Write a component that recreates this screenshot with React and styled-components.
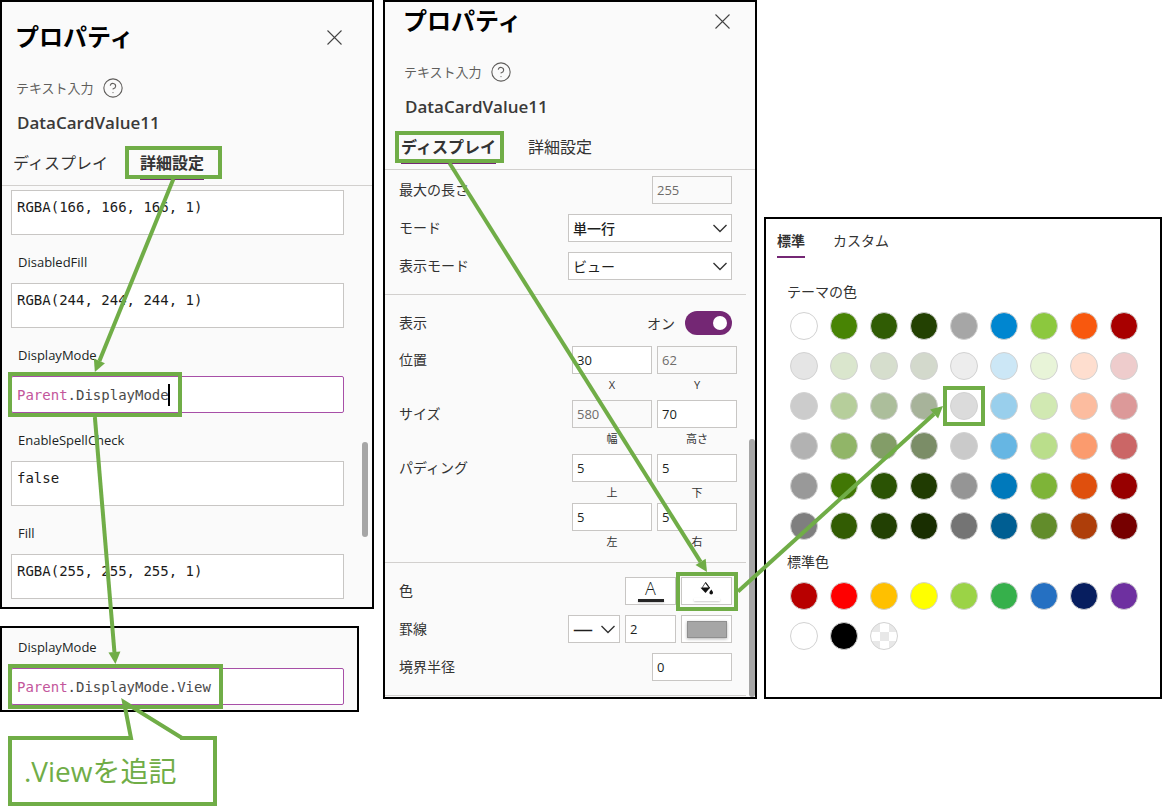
import React, { useLayoutEffect, useRef, useState } from "react";
import styled, { createGlobalStyle, css } from "styled-components";
import { CircleHelp } from "lucide-react";

const GREEN = "#70ad47";
const PURPLE = "#742774";

const GlobalStyle = createGlobalStyle`
  * {
    box-sizing: border-box;
  }

  body {
    margin: 0;
    background: #fff;
    color: #333;
    font-family: "Open Sans", "Noto Sans CJK JP", sans-serif;
    font-size: 14px;
  }

  button,
  input,
  select,
  textarea {
    margin: 0;
    font: inherit;
    color: inherit;
  }
`;

const Board = styled.main`
  position: relative;
  display: grid;
  grid-template-columns: 374fr 779fr;
  gap: 9px;
  align-items: start;
`;

const LeftColumn = styled.div`
  display: flex;
  flex-direction: column;
`;

const RightColumn = styled.div`
  display: grid;
  grid-template-columns: 374fr 398fr;
  gap: 7px;
  align-items: end;
`;

const Panel = styled.section`
  position: relative;
  border: 2px solid #000;
  background: ${({ $white }) => ($white ? "#fff" : "#fafafa")};
`;

const ResultPanel = styled(Panel)`
  margin: 17px 15px 0 0;
  padding: 0 13px 5px 9px;
`;

/* header */

const Header = styled.header`
  padding: ${({ $scrolled }) =>
    $scrolled ? "1px 25px 0 16px" : "17px 30px 0 11px"};
  border-bottom: 1px solid #d2d0ce;
`;

const TitleRow = styled.div`
  display: flex;
  align-items: center;
  justify-content: space-between;
  height: 36px;
  padding-left: 2px;
  margin-bottom: 16px;
`;

const Title = styled.h1`
  margin: 0;
  font-size: 24px;
  line-height: 36px;
  font-weight: 700;
  color: #000;
`;

const CloseButton = styled.button`
  display: flex;
  padding: 0;
  border: 0;
  background: none;
  color: #444;
`;

const TypeRow = styled.div`
  display: flex;
  align-items: center;
  gap: 8px;
  height: 33px;
  padding-left: 3px;
  font-size: 13px;
  color: #605e5c;
`;

const ControlName = styled.h2`
  margin: 0;
  padding-left: 4px;
  font-size: 17px;
  line-height: 38px;
  font-weight: 600;
  color: #3b3a39;
`;

const Tabs = styled.div`
  display: flex;
  gap: 32px;
  padding-bottom: 5px;
`;

const Tab = styled.button`
  position: relative;
  height: 38px;
  padding: 6px 0 0;
  border: 0;
  border-bottom: 2px solid ${({ $active }) => ($active ? PURPLE : "transparent")};
  background: none;
  font-size: 16px;
  line-height: 30px;
  font-weight: ${({ $active }) => ($active ? 700 : 400)};
  white-space: nowrap;
`;

const Highlight = styled.span`
  position: absolute;
  inset: ${({ $inset }) => $inset};
  z-index: 2;
  border: 4px solid ${GREEN};
  pointer-events: none;
`;

/* formula list */

const Formulas = styled.div`
  padding: 4px 28px 8px 9px;
`;

const FormulaLabel = styled.label`
  display: block;
  padding: ${({ $compact }) => ($compact ? "0 0 2px 7px" : "6px 0 0 7px")};
  font-size: 13px;
  line-height: ${({ $compact }) => ($compact ? "38px" : "42px")};
  color: #201f1e;
`;

const codeText = css`
  font-family: "DejaVu Sans Mono", "Liberation Mono", monospace;
  font-size: 14px;
`;

const FormulaBox = styled.textarea`
  ${codeText}
  display: block;
  width: 100%;
  height: 45px;
  padding: 6px 5px;
  border: 1px solid #c8c6c4;
  border-radius: 0;
  background: #fff;
  line-height: 20px;
  color: #1b1b1b;
  resize: none;
`;

const Editor = styled.div`
  position: relative;
  height: 37px;
  border: 1px solid #a74fa7;
  border-radius: 2px;
  background: #fff;
`;

const EditorInput = styled.input`
  ${codeText}
  position: absolute;
  inset: 0;
  width: 100%;
  padding: 0 5px;
  border: 0;
  outline: 0;
  background: none;
  color: transparent;
`;

const Tokens = styled.div`
  ${codeText}
  position: relative;
  display: inline-flex;
  align-items: center;
  height: 35px;
  padding: 0 5px;
  color: #4a4a4a;
`;

const Keyword = styled.span`
  color: #c3569b;
`;

const Caret = styled.span`
  width: 2px;
  height: 22px;
  margin-left: -1px;
  background: #000;
`;

const Scrollbar = styled.div`
  position: absolute;
  right: ${({ $right }) => $right};
  top: ${({ $top }) => $top};
  bottom: ${({ $bottom }) => $bottom};
  width: 6px;
  border-radius: 3px;
  background: #a6a6a6;
`;

/* display settings */

const DisplayBody = styled.div`
  padding-bottom: 1px;
`;

const Section = styled.div`
  display: flex;
  flex-direction: column;
  gap: ${({ $gap }) => $gap};
  margin-right: 9px;
  padding: ${({ $pad }) => $pad};
  border-bottom: 1px solid #d2d0ce;
`;

const Row = styled.div`
  display: flex;
  align-items: ${({ $top }) => ($top ? "flex-start" : "center")};
  justify-content: space-between;
  min-height: ${({ $tall }) => ($tall ? "36px" : "28px")};
  margin-right: ${({ $top }) => ($top ? "-5px" : "0")};
`;

const RowLabel = styled.label`
  line-height: 28px;
  white-space: nowrap;
`;

const Controls = styled.div`
  display: flex;
  gap: 5px;
`;

const PairGrid = styled.div`
  display: grid;
  grid-template-columns: 80px 80px;
  column-gap: 5px;
`;

const PairCell = styled.label`
  display: flex;
  flex-direction: column;
  font-size: 11px;
  line-height: 21px;
  text-align: center;
`;

const boxed = css`
  height: 28px;
  border: 1px solid #c8c6c4;
  border-radius: 0;
  background: #fff;
`;

const NumberInput = styled.input`
  ${boxed}
  width: ${({ $width }) => $width || "80px"};
  padding: 0 4px;
  font-size: 13px;
  color: #201f1e;

  &:disabled {
    background: #fafafa;
    color: #6e6c6a;
  }
`;

const SelectWrap = styled.div`
  position: relative;
  width: ${({ $width }) => $width};

  svg {
    position: absolute;
    top: 10px;
    right: 5px;
    pointer-events: none;
  }
`;

const Select = styled.select`
  ${boxed}
  display: block;
  width: 100%;
  padding: 0 4px;
  appearance: none;
  font-weight: ${({ $strong }) => ($strong ? 500 : 400)};
  color: #201f1e;
`;

const LineSelect = styled(Select)`
  font-size: 20px;
  line-height: 24px;
`;

const ToggleLabel = styled.label`
  display: flex;
  align-items: center;
  gap: 10px;
`;

const Toggle = styled.input`
  appearance: none;
  width: 47px;
  height: 24px;
  border-radius: 12px;
  background: ${PURPLE};

  &::before {
    content: "";
    display: block;
    width: 14px;
    height: 14px;
    margin: 5px 5px 5px 28px;
    border-radius: 50%;
    background: #fff;
  }
`;

const ToolButton = styled.button`
  ${boxed}
  position: relative;
  display: flex;
  flex-direction: column;
  align-items: center;
  justify-content: center;
  gap: 2px;
  width: 51px;
  padding: 0;
`;

const Letter = styled.span`
  font-size: 18px;
  line-height: 17px;
  font-weight: 300;
  color: #201f1e;
`;

const ColorBar = styled.span`
  width: 26px;
  height: 3px;
  background: ${({ $color }) => $color};
  box-shadow: 0 1px 2px rgba(0, 0, 0, 0.2);
`;

const BorderColor = styled.span`
  width: 40px;
  height: 17px;
  border: 1px solid #8f8f8f;
  background: #a6a6a6;
  box-shadow: 0 1px 3px rgba(0, 0, 0, 0.3);
`;

/* colour picker */

const Picker = styled(Panel)`
  padding: 6px 11px 47px;
`;

const PickerTabs = styled.div`
  display: flex;
  gap: 28px;
`;

const PickerTab = styled.button`
  padding: 0;
  border: 0;
  border-bottom: 2px solid ${({ $active }) => ($active ? PURPLE : "transparent")};
  background: none;
  line-height: 31px;
  font-weight: ${({ $active }) => ($active ? 700 : 400)};
`;

const PaletteTitle = styled.h3`
  margin: ${({ $first }) => ($first ? "14px" : "2px")} 0 0 10px;
  font-size: 14px;
  line-height: 40px;
  font-weight: 400;
`;

const Palette = styled.div`
  display: grid;
  grid-template-columns: repeat(9, 28px);
  gap: 12px;
  margin-left: 13px;
`;

const Swatch = styled.button`
  position: relative;
  height: 28px;
  padding: 0;
  border: 1px solid #d2d2d2;
  border-radius: 50%;
  background: ${({ $color }) => $color};
`;

/* annotations */

const Callout = styled.div`
  position: relative;
  align-self: flex-start;
  margin: 24px 0 0 8px;
  padding: 10px 36px 9px 12px;
  border: 4px solid ${GREEN};
  background: #fff;
  font-size: 28px;
  line-height: 43px;
  color: ${GREEN};
`;

const CalloutTail = styled.svg`
  position: absolute;
  top: -44px;
  left: 102px;
  z-index: 3;
  overflow: visible;
`;

const ArrowLayer = styled.svg`
  position: absolute;
  inset: 0;
  z-index: 3;
  width: 100%;
  height: 100%;
  pointer-events: none;
`;

const formulas = [
  { value: "RGBA(166, 166, 166, 1)" },
  { name: "DisabledFill", value: "RGBA(244, 244, 244, 1)" },
  { name: "DisplayMode", editing: true },
  { name: "EnableSpellCheck", value: "false" },
  { name: "Fill", value: "RGBA(255, 255, 255, 1)" },
];

const themeBase = [
  "#488404",
  "#305c04",
  "#234102",
  "#a6a6a6",
  "#0086d0",
  "#8cc83e",
  "#f8580e",
  "#a80000",
];

// tint > 0 blends with white, tint < 0 darkens
const shade = (hex, tint) => {
  const parts = [1, 3, 5].map((i) => parseInt(hex.slice(i, i + 2), 16));
  const mixed = parts.map((c) =>
    Math.round(tint > 0 ? c + (255 - c) * tint : c * (1 + tint))
  );
  return `rgb(${mixed.join(", ")})`;
};

const themeRows = [
  { first: "#ffffff", tint: 0 },
  { first: "#e5e5e5", tint: 0.8 },
  { first: "#cccccc", tint: 0.6 },
  { first: "#b2b2b2", tint: 0.4 },
  { first: "#999999", tint: -0.1 },
  { first: "#7f7f7f", tint: -0.3 },
];

const themeColors = themeRows.flatMap(({ first, tint }) => [
  first,
  ...themeBase.map((color) => shade(color, tint)),
]);

const standardColors = [
  "#b80000",
  "#ff0000",
  "#ffc000",
  "#ffff00",
  "#9bd346",
  "#36b04b",
  "#2570c2",
  "#071e5f",
  "#6e30a0",
  "#ffffff",
  "#000000",
  "repeating-conic-gradient(#fff 0 25%, #e8e8e8 0 50%) 0 0 / 18px 18px",
];

const links = [
  { from: "advanced", to: "mode", vertical: true },
  { from: "mode", to: "view", vertical: true },
  { from: "display", to: "fill", vertical: true },
  { from: "fill", to: "swatch", vertical: false },
];

const Arrow = ({ x1, y1, x2, y2 }) => {
  const length = Math.hypot(x2 - x1, y2 - y1) || 1;
  const ux = (x2 - x1) / length;
  const uy = (y2 - y1) / length;
  const bx = x2 - ux * 12;
  const by = y2 - uy * 12;

  return (
    <g>
      <line x1={x1} y1={y1} x2={bx} y2={by} stroke={GREEN} strokeWidth='4' />
      <polygon
        fill={GREEN}
        points={`${x2},${y2} ${bx - uy * 6},${by + ux * 6} ${bx + uy * 6},${
          by - ux * 6
        }`}
      />
    </g>
  );
};

const Arrows = ({ boardRef }) => {
  const [lines, setLines] = useState([]);

  useLayoutEffect(() => {
    const board = boardRef.current;

    const measure = () => {
      const origin = board.getBoundingClientRect();
      const box = (name) =>
        board.querySelector(`[data-mark="${name}"]`).getBoundingClientRect();

      setLines(
        links.map(({ from, to, vertical }) => {
          const a = box(from);
          const b = box(to);
          return {
            id: from + to,
            x1: (vertical ? (a.left + a.right) / 2 : a.right) - origin.left,
            y1: (vertical ? a.bottom : (a.top + a.bottom) / 2) - origin.top,
            x2: (vertical ? (b.left + b.right) / 2 : b.left) - origin.left,
            y2: (vertical ? b.top : (b.top + b.bottom) / 2) - origin.top,
          };
        })
      );
    };

    measure();
    const observer = new ResizeObserver(measure);
    observer.observe(board);
    return () => observer.disconnect();
  }, [boardRef]);

  return (
    <ArrowLayer aria-hidden='true'>
      {lines.map(({ id, ...line }) => (
        <Arrow key={id} {...line} />
      ))}
    </ArrowLayer>
  );
};

const Chevron = () => (
  <svg width='14' height='9' viewBox='0 0 14 9' fill='none' stroke='#333'>
    <path d='M0.500 1l6.500 6.500 6.500-6.500' strokeWidth='1.4' />
  </svg>
);

const PanelHeader = ({ active, scrolled }) => (
  <Header $scrolled={scrolled}>
    <TitleRow>
      <Title>プロパティ</Title>
      <CloseButton type='button' aria-label='閉じる'>
        <svg width='15' height='15' viewBox='0 0 15 15' stroke='currentColor'>
          <path d='M0.5 0.5l14 14M14.5 0.5l-14 14' strokeWidth='1.1' />
        </svg>
      </CloseButton>
    </TitleRow>
    <TypeRow>
      テキスト入力
      <CircleHelp size={22} strokeWidth={1.2} />
    </TypeRow>
    <ControlName>DataCardValue11</ControlName>
    <Tabs role='tablist'>
      <Tab
        type='button'
        role='tab'
        aria-selected={active === "display"}
        $active={active === "display"}
      >
        ディスプレイ
        {active === "display" && (
          <Highlight data-mark='display' $inset='5px -8px -1px -6px' />
        )}
      </Tab>
      <Tab
        type='button'
        role='tab'
        aria-selected={active === "advanced"}
        $active={active === "advanced"}
      >
        詳細設定
        {active === "advanced" && (
          <Highlight data-mark='advanced' $inset='4px -18px -1px -15px' />
        )}
      </Tab>
    </Tabs>
  </Header>
);

const ModeEditor = ({ id, rest, mark, caret }) => (
  <Editor>
    <Tokens aria-hidden='true'>
      <Keyword>Parent</Keyword>
      {rest}
      {caret && <Caret />}
      <Highlight data-mark={mark} $inset='-5px -7px -5px -4px' />
    </Tokens>
    <EditorInput id={id} defaultValue={"Parent" + rest} spellCheck={false} />
  </Editor>
);

const Pair = ({ label, cells }) => (
  <Row $top>
    <RowLabel as='span'>{label}</RowLabel>
    <PairGrid>
      {cells.map(({ name, value, disabled }) => (
        <PairCell key={name}>
          <NumberInput defaultValue={value} disabled={disabled} />
          {name}
        </PairCell>
      ))}
    </PairGrid>
  </Row>
);

const AdvancedPanel = () => (
  <Panel>
    <PanelHeader active='advanced' />
    <Formulas>
      {formulas.map(({ name, value, editing }) => (
        <div key={name || "color"}>
          {name && <FormulaLabel htmlFor={name}>{name}</FormulaLabel>}
          {editing ? (
            <ModeEditor id={name} rest='.DisplayMode' mark='mode' caret />
          ) : (
            <FormulaBox
              id={name}
              aria-label={name ? undefined : "DisabledColor"}
              defaultValue={value}
              spellCheck={false}
            />
          )}
        </div>
      ))}
    </Formulas>
    <Scrollbar $right='4px' $top='440px' $bottom='70px' />
  </Panel>
);

const DisplayPanel = () => (
  <Panel>
    <PanelHeader active='display' scrolled />
    <DisplayBody>
      <Section $gap='10px' $pad='6px 14px 14px 14px'>
        <Row>
          <RowLabel htmlFor='maxLength'>最大の長さ</RowLabel>
          <NumberInput id='maxLength' defaultValue='255' disabled />
        </Row>
        <Row>
          <RowLabel htmlFor='textMode'>モード</RowLabel>
          <SelectWrap $width='164px'>
            <Select id='textMode' $strong>
              <option>単一行</option>
            </Select>
            <Chevron />
          </SelectWrap>
        </Row>
        <Row>
          <RowLabel htmlFor='viewMode'>表示モード</RowLabel>
          <SelectWrap $width='164px'>
            <Select id='viewMode'>
              <option>ビュー</option>
            </Select>
            <Chevron />
          </SelectWrap>
        </Row>
      </Section>

      <Section $gap='5px' $pad='10px 14px 10px 14px'>
        <Row $tall>
          <RowLabel htmlFor='visible'>表示</RowLabel>
          <ToggleLabel>
            オン
            <Toggle id='visible' type='checkbox' role='switch' defaultChecked />
          </ToggleLabel>
        </Row>
        <Pair
          label='位置'
          cells={[
            { name: "X", value: "30" },
            { name: "Y", value: "62", disabled: true },
          ]}
        />
        <Pair
          label='サイズ'
          cells={[
            { name: "幅", value: "580", disabled: true },
            { name: "高さ", value: "70" },
          ]}
        />
        <Pair
          label='パディング'
          cells={[
            { name: "上", value: "5" },
            { name: "下", value: "5" },
            { name: "左", value: "5" },
            { name: "右", value: "5" },
          ]}
        />
      </Section>

      <Section $gap='10px' $pad='14px 14px 14px 14px'>
        <Row>
          <RowLabel as='span'>色</RowLabel>
          <Controls>
            <ToolButton type='button' aria-label='文字の色'>
              <Letter>A</Letter>
              <ColorBar $color='#252525' />
            </ToolButton>
            <ToolButton type='button' aria-label='塗りつぶしの色'>
              <svg width='14' height='15' viewBox='0 0 14 15'>
                <path
                  d='M5.5 1.500L2 7h7.500z'
                  fill='#fff'
                  stroke='#555'
                  strokeWidth='1'
                />
                <path d='M5.500 1.500L9.500 7' stroke='#222' strokeWidth='1.2' />
                <path d='M0.500 6.800h9.500L5.5 12z' fill='#111' />
                <path
                  d='M11.3 8.500c1 1.300 1.700 2.200 1.700 3.200a1.800 1.800 0 0 1-3.600 0c0-1 .9-1.900 1.900-3.200z'
                  fill='#111'
                />
              </svg>
              <ColorBar $color='#fff' />
              <Highlight data-mark='fill' $inset='-6px -7px -7px -6px' />
            </ToolButton>
          </Controls>
        </Row>
        <Row>
          <RowLabel htmlFor='borderStyle'>罫線</RowLabel>
          <Controls>
            <SelectWrap $width='52px'>
              <LineSelect id='borderStyle'>
                <option>—</option>
              </LineSelect>
              <Chevron />
            </SelectWrap>
            <NumberInput aria-label='罫線の太さ' defaultValue='2' $width='51px' />
            <ToolButton type='button' aria-label='罫線の色'>
              <BorderColor />
            </ToolButton>
          </Controls>
        </Row>
        <Row>
          <RowLabel htmlFor='radius'>境界半径</RowLabel>
          <NumberInput id='radius' defaultValue='0' />
        </Row>
      </Section>
    </DisplayBody>
    <Scrollbar $right='0' $top='437px' $bottom='0' />
  </Panel>
);

const ColorPicker = () => (
  <Picker $white>
    <PickerTabs role='tablist'>
      <PickerTab type='button' role='tab' aria-selected='true' $active>
        標準
      </PickerTab>
      <PickerTab type='button' role='tab' aria-selected='false'>
        カスタム
      </PickerTab>
    </PickerTabs>
    <PaletteTitle $first>テーマの色</PaletteTitle>
    <Palette>
      {themeColors.map((color, index) => (
        <Swatch key={index} type='button' aria-label={color} $color={color}>
          {index === 22 && (
            <Highlight data-mark='swatch' $inset='-7px -8px -7px -8px' />
          )}
        </Swatch>
      ))}
    </Palette>
    <PaletteTitle>標準色</PaletteTitle>
    <Palette>
      {standardColors.map((color, index) => (
        <Swatch
          key={color}
          type='button'
          aria-label={index === 11 ? "透明" : color}
          $color={color}
        />
      ))}
    </Palette>
  </Picker>
);

const App = () => {
  const boardRef = useRef(null);

  return (
    <>
      <GlobalStyle />
      <Board ref={boardRef}>
        <LeftColumn>
          <AdvancedPanel />
          <ResultPanel>
            <FormulaLabel htmlFor='result' $compact>
              DisplayMode
            </FormulaLabel>
            <ModeEditor id='result' rest='.DisplayMode.View' mark='view' />
          </ResultPanel>
          <Callout>
            <CalloutTail width='76' height='44' fill='none' aria-hidden='true'>
              <path d='M18 40h48v4H18z' fill='#fff' />
              <path
                d='M10 42H17L10 6L68 42H76'
                stroke={GREEN}
                strokeWidth='4'
                strokeMiterlimit='10'
              />
            </CalloutTail>
            .Viewを追記
          </Callout>
        </LeftColumn>
        <RightColumn>
          <DisplayPanel />
          <ColorPicker />
        </RightColumn>
      </Board>
      <Arrows boardRef={boardRef} />
    </>
  );
};

export default App;
